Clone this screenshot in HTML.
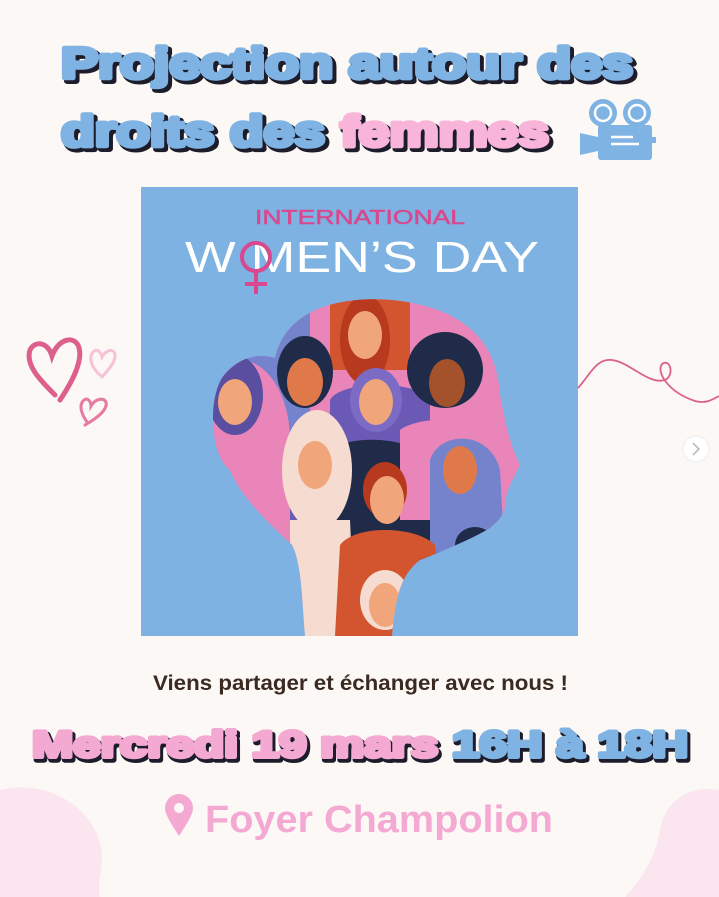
<!DOCTYPE html>
<html><head><meta charset="utf-8"><style>
html,body{margin:0;padding:0;background:#fcf8f5;}
svg{display:block}
.t{font-family:"Liberation Sans",sans-serif;font-weight:900;}
</style></head><body>
<svg width="719" height="897" viewBox="0 0 719 897" xmlns="http://www.w3.org/2000/svg">
<rect width="719" height="897" fill="#fcf8f5"/>
<path d="M0,790 C40,780 80,800 95,830 C110,860 95,880 100,897 L0,897 Z" fill="#fbe6f0"/>
<path d="M719,790 C690,785 665,800 660,830 C655,860 640,880 625,897 L719,897 Z" fill="#fbe6f0"/>
<g class="t" font-size="44" stroke-linejoin="round">
<text x="64" y="81" textLength="572" lengthAdjust="spacingAndGlyphs" fill="#1c1c2a" stroke="#1c1c2a" stroke-width="6">Projection autour des</text>
<text x="61" y="78" textLength="572" lengthAdjust="spacingAndGlyphs" fill="#7fb3e3" stroke="#7fb3e3" stroke-width="4.5">Projection autour des</text>
<text x="64" y="149" textLength="488" lengthAdjust="spacingAndGlyphs" fill="#1c1c2a" stroke="#1c1c2a" stroke-width="6">droits des femmes</text>
<text x="61" y="146" textLength="488" lengthAdjust="spacingAndGlyphs" fill="#7fb3e3" stroke="#7fb3e3" stroke-width="4.5">droits des <tspan fill="#f8b5d9" stroke="#f8b5d9">femmes</tspan></text>
</g>
<g fill="#7fb3e3">
<circle cx="603" cy="113" r="14"/><circle cx="637" cy="113" r="14"/>
<rect x="598" y="125" width="54" height="35" rx="3"/>
<path d="M580,133 L598,137 L598,151 L580,155 Z"/>
<rect x="650" y="137" width="6" height="6"/>
</g>
<g fill="none" stroke="#fff" stroke-width="2.5"><circle cx="603" cy="113" r="8"/><circle cx="637" cy="113" r="8"/>
<line x1="611" y1="137" x2="633" y2="137"/><line x1="611" y1="144" x2="639" y2="144"/></g>
<rect x="141" y="187" width="437" height="449" fill="#7eb2e2"/>
<text x="360" y="224" text-anchor="middle" font-family="Liberation Sans,sans-serif" font-size="20" fill="#d9488f" stroke="#d9488f" stroke-width="0.5" textLength="210" lengthAdjust="spacingAndGlyphs">INTERNATIONAL</text>
<text x="362" y="272" text-anchor="middle" font-family="Liberation Sans,sans-serif" font-size="44" fill="#fff" textLength="354" lengthAdjust="spacingAndGlyphs">W  MEN’S DAY</text>
<g fill="none" stroke="#d9488f" stroke-width="4"><circle cx="256" cy="257" r="14"/><line x1="256" y1="271" x2="256" y2="294"/><line x1="245" y1="284" x2="267" y2="284"/></g>
<defs><clipPath id="head"><path d="M305,636 C302,600 302,565 292,545 C265,520 240,495 230,470 C210,455 208,400 222,378 C235,360 255,352 275,358 C280,335 295,318 320,308 C360,293 420,298 455,318 C490,338 498,368 500,395 C505,420 508,440 520,465 L515,475 C510,485 505,495 505,505 C505,515 497,522 490,528 C470,540 440,552 420,560 C400,575 395,600 392,636 Z"/></clipPath></defs>
<g clip-path="url(#head)">
<rect x="200" y="290" width="330" height="346" fill="#e985b8"/>
<rect x="200" y="290" width="110" height="170" fill="#7483cc"/>
<rect x="330" y="290" width="80" height="80" fill="#d2552f"/>
<ellipse cx="240" cy="440" rx="50" ry="80" fill="#e985b8"/>
<ellipse cx="235" cy="395" rx="28" ry="40" fill="#5a4ea0"/>
<ellipse cx="235" cy="402" rx="17" ry="23" fill="#f0a57a"/>
<path d="M290,470 C300,430 350,420 370,450 L380,560 L290,560 Z" fill="#6b5ab5"/>
<ellipse cx="305" cy="372" rx="28" ry="36" fill="#1f2b48"/>
<ellipse cx="305" cy="382" rx="18" ry="24" fill="#e0794a"/>
<ellipse cx="365" cy="340" rx="25" ry="45" fill="#b83a1e"/>
<ellipse cx="365" cy="335" rx="17" ry="24" fill="#f0a57a"/>
<path d="M330,400 C340,380 420,380 430,400 L430,470 L330,470 Z" fill="#6b5ab5"/>
<ellipse cx="376" cy="400" rx="26" ry="32" fill="#7b6bc5"/>
<ellipse cx="376" cy="402" rx="17" ry="23" fill="#f0a57a"/>
<path d="M330,450 C350,435 410,435 430,460 L440,560 L330,560 Z" fill="#1f2b48"/>
<ellipse cx="445" cy="370" rx="38" ry="38" fill="#1f2b48"/>
<ellipse cx="447" cy="383" rx="18" ry="24" fill="#a3522c"/>
<path d="M400,430 C420,415 480,415 500,440 L500,520 L400,520 Z" fill="#e985b8"/>
<ellipse cx="317" cy="470" rx="35" ry="60" fill="#f6dcd0"/>
<ellipse cx="315" cy="465" rx="17" ry="24" fill="#f0a57a"/>
<path d="M290,520 L350,520 L355,636 L290,636 Z" fill="#f6dcd0"/>
<path d="M430,460 C440,430 490,430 500,470 L505,560 L430,560 Z" fill="#7483cc"/>
<ellipse cx="460" cy="470" rx="17" ry="24" fill="#e0794a"/>
<ellipse cx="385" cy="490" rx="22" ry="28" fill="#b83a1e"/>
<ellipse cx="387" cy="500" rx="17" ry="24" fill="#f0a57a"/>
<path d="M340,545 C355,525 415,525 435,545 L445,636 L335,636 Z" fill="#d2552f"/>
<ellipse cx="385" cy="600" rx="25" ry="30" fill="#f6dcd0"/>
<ellipse cx="385" cy="605" rx="16" ry="22" fill="#f0a57a"/>
<ellipse cx="475" cy="545" rx="20" ry="18" fill="#1f2b48"/>
</g>
<g fill="none" stroke-linecap="round">
<path d="M55,395 C40,380 25,365 30,350 C35,340 48,342 52,356 C58,340 72,335 78,345 C85,360 70,385 60,400" stroke="#dc5f8c" stroke-width="5"/>
<path d="M100,375 C92,368 88,358 93,352 C97,348 101,352 102,357 C106,350 113,348 115,354 C116,362 108,370 102,377" stroke="#f6c2d6" stroke-width="3"/>
<path d="M87,422 C82,415 78,405 84,400 C88,397 91,402 91,406 C95,399 103,397 106,402 C108,410 97,418 85,425" stroke="#e57aa3" stroke-width="3"/>
</g>
<path d="M578,388 C590,375 596,358 612,360 C630,362 648,385 665,380 C675,375 670,358 662,364 C656,372 668,392 695,401 C705,404 712,400 719,396" fill="none" stroke="#dc5f8c" stroke-width="1.8"/>
<circle cx="696" cy="449" r="13" fill="#fff" stroke="#ecebeb"/>
<path d="M693,443 L699,449 L693,455" fill="none" stroke="#bbb" stroke-width="1.6"/>
<text x="153" y="690" font-family="Liberation Sans Narrow,Liberation Sans,sans-serif" font-weight="bold" font-size="21" fill="#3b2a22" textLength="415" lengthAdjust="spacingAndGlyphs">Viens partager et échanger avec nous  !</text>
<g class="t" font-size="37" stroke-linejoin="round">
<text x="34" y="760" textLength="656" lengthAdjust="spacingAndGlyphs" fill="#1c1c2a" stroke="#1c1c2a" stroke-width="5.5">Mercredi 19 mars  16H à 18H</text>
<text x="32" y="757" textLength="656" lengthAdjust="spacingAndGlyphs" fill="#f4a9d3" stroke="#f4a9d3" stroke-width="4">Mercredi 19 mars  <tspan fill="#7fb3e3" stroke="#7fb3e3">16H à 18H</tspan></text>
</g>
<path d="M179,836 C170,822 165,814 165,808 A14,14 0 0 1 193,808 C193,814 188,822 179,836 Z" fill="#f4a9d3"/>
<circle cx="179" cy="808" r="5" fill="#fcf8f5"/>
<text x="205" y="832" font-family="Liberation Sans,sans-serif" font-weight="bold" font-size="38" fill="#f4a9d3" textLength="348" lengthAdjust="spacingAndGlyphs">Foyer Champolion</text>
</svg>
</body></html>
